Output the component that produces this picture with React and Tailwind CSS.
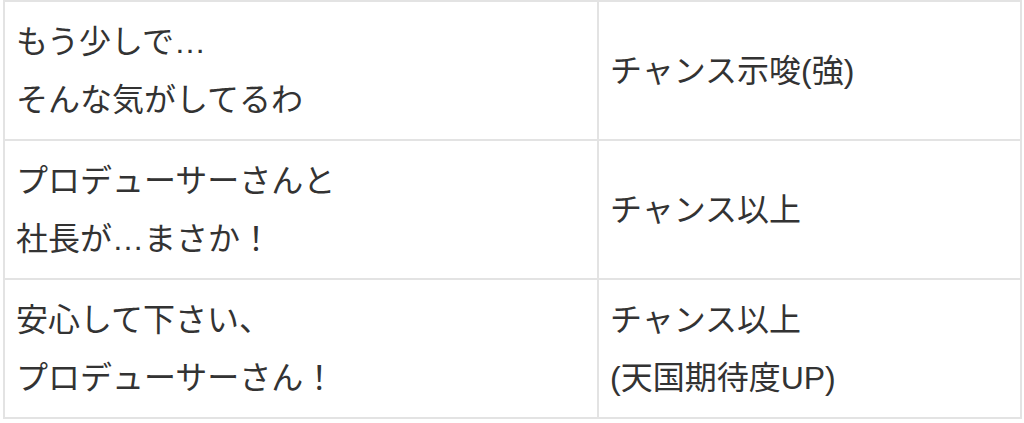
const rows = [
  { left: ['もう少しで…', 'そんな気がしてるわ'], right: ['チャンス示唆(強)'] },
  { left: ['プロデューサーさんと', '社長が…まさか！'], right: ['チャンス以上'] },
  { left: ['安心して下さい、', 'プロデューサーさん！'], right: ['チャンス以上', '(天国期待度UP)'] },
];

export default function App() {
  return (
    <div className="bg-white w-[1024px] h-[423px] overflow-hidden">
      <table
        className="ml-[3px] w-[1019px] table-fixed border-collapse text-[#333] text-[32px] leading-[58px]"
        style={{ fontFamily: '"Liberation Sans", "Noto Sans CJK JP", sans-serif' }}
      >
        <tbody>
          {rows.map((r, i) => (
            <tr key={i} className="h-[139px]">
              <td className="w-[594px] border-2 border-[#e3e3e3] pl-[11px] pr-[12px] py-[10px] align-middle">
                {r.left.map((t) => (
                  <div key={t}>{t}</div>
                ))}
              </td>
              <td className="border-2 border-[#e3e3e3] pl-[11px] pr-[12px] py-[10px] align-middle">
                {r.right.map((t) => (
                  <div key={t}>{t}</div>
                ))}
              </td>
            </tr>
          ))}
        </tbody>
      </table>
    </div>
  );
}
